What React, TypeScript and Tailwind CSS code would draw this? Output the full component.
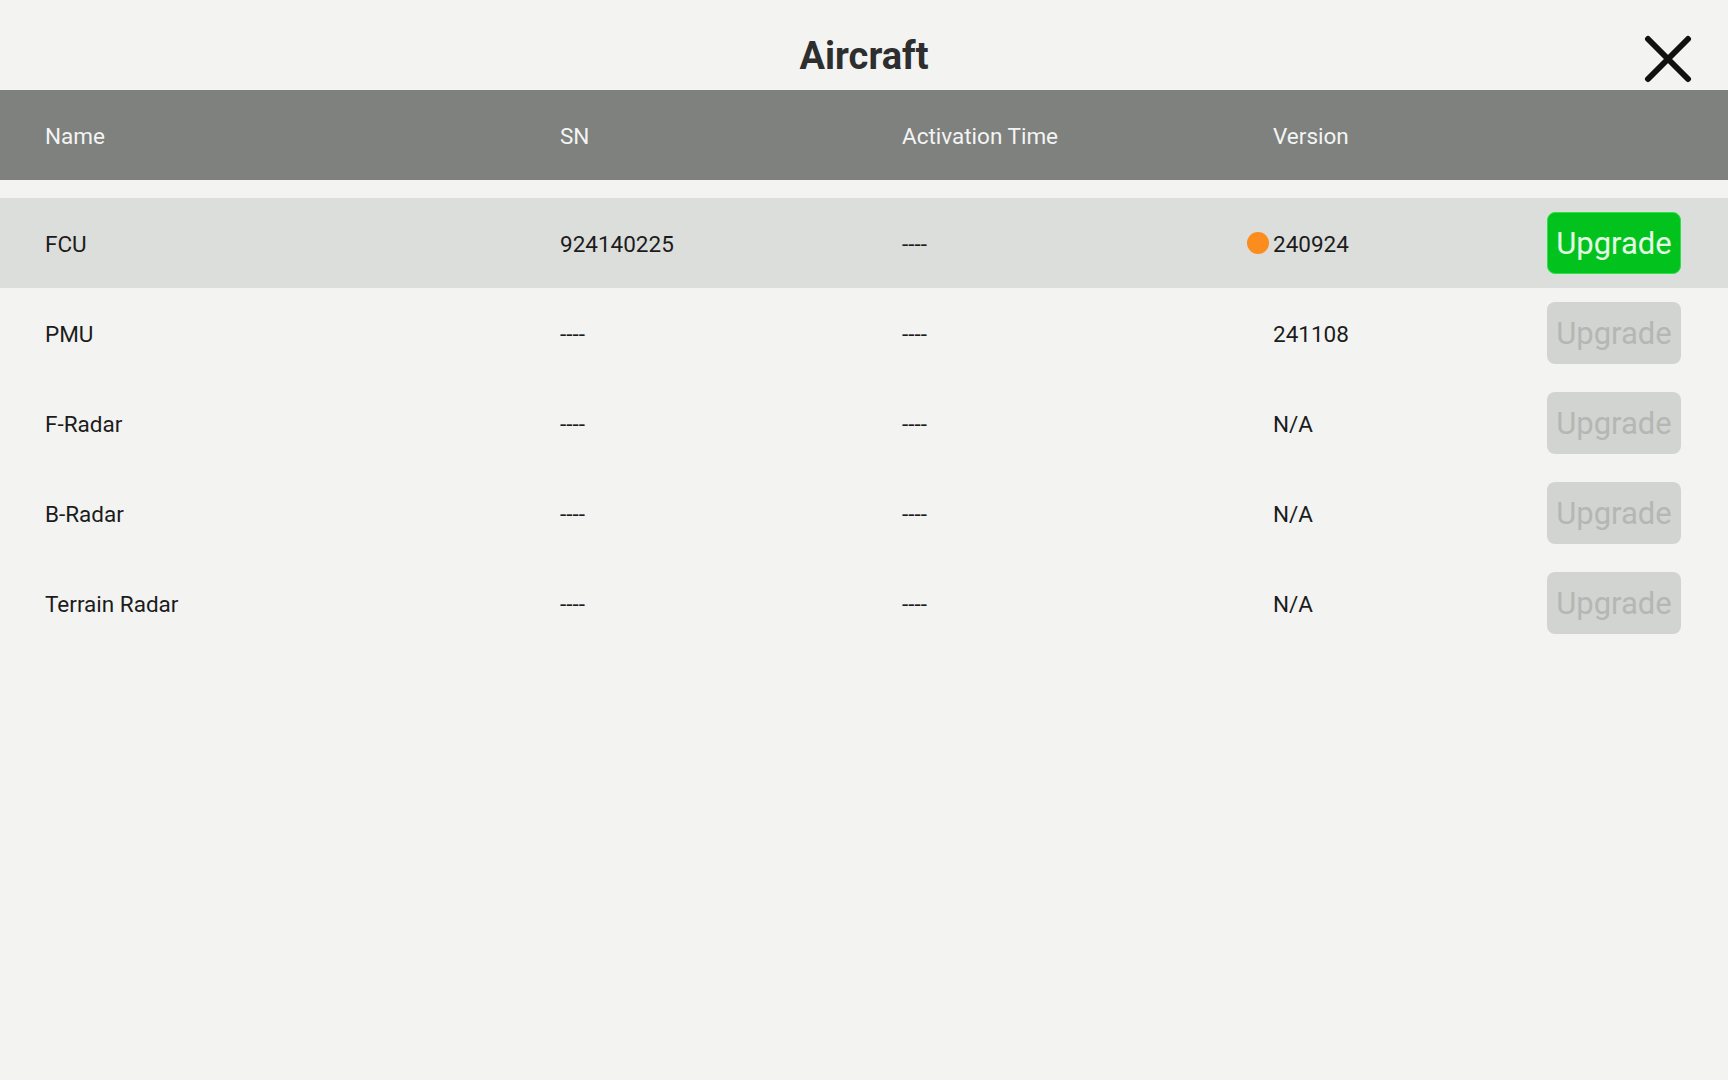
import React from "react";

type Row = { name: string; sn: string; time: string; version: string; dot?: boolean; active?: boolean };

const rows: Row[] = [
  { name: "FCU", sn: "924140225", time: "----", version: "240924", dot: true, active: true },
  { name: "PMU", sn: "----", time: "----", version: "241108" },
  { name: "F-Radar", sn: "----", time: "----", version: "N/A" },
  { name: "B-Radar", sn: "----", time: "----", version: "N/A" },
  { name: "Terrain Radar", sn: "----", time: "----", version: "N/A" },
];

const cols = "grid grid-cols-[515px_342px_371px_1fr_auto] items-center pl-[45px] pr-[47px]";

export default function App() {
  return (
    <div className="w-[1728px] h-[1080px] bg-[#f3f4f2] font-['Roboto',sans-serif] overflow-hidden">
      <div className="grid grid-cols-[1fr_auto_1fr] items-center h-[90px]">
        <div />
        <div className="pt-[21px] text-[38px] leading-none font-bold text-[#2e2e2e]">Aircraft</div>
        <div className="flex justify-end pr-[36px] pt-[28px]">
          <svg width="48" height="48" viewBox="0 0 48 48">
            <path d="M4 4 L44 44 M44 4 L4 44" stroke="#111" strokeWidth="6" strokeLinecap="round" fill="none" />
          </svg>
        </div>
      </div>
      <div className={`${cols} h-[90px] bg-[#7e817d] text-[#f4f4f4] text-[22.5px] leading-none pt-[2px]`}>
        <div>Name</div>
        <div>SN</div>
        <div>Activation Time</div>
        <div>Version</div>
        <div className="w-[134px]" />
      </div>
      <div className="h-[18px]" />
      {rows.map((r) => (
        <div
          key={r.name}
          className={`${cols} h-[90px] text-[22.5px] leading-none text-[#1c1c1c] ${r.active ? "bg-[#dcdedb]" : ""}`}
        >
          <div className="pt-[2px]">{r.name}</div>
          <div className="pt-[2px]">{r.sn}</div>
          <div className="pt-[2px]">{r.time}</div>
          <div className="relative pt-[2px]">
            {r.dot && (
              <span className="absolute right-full mr-[4px] top-[1px] w-[22px] h-[22px] rounded-full bg-[#fb8c1e]" />
            )}
            {r.version}
          </div>
          <div
            className={`w-[134px] h-[62px] rounded-[8px] flex items-center justify-center text-[31px] leading-none ${
              r.active
                ? "bg-[#02c31e] text-[#e3fbe3] border border-[#2fe04a]"
                : "bg-[#d2d4d1] text-[#b4b7b3]"
            }`}
          >
            Upgrade
          </div>
        </div>
      ))}
    </div>
  );
}
